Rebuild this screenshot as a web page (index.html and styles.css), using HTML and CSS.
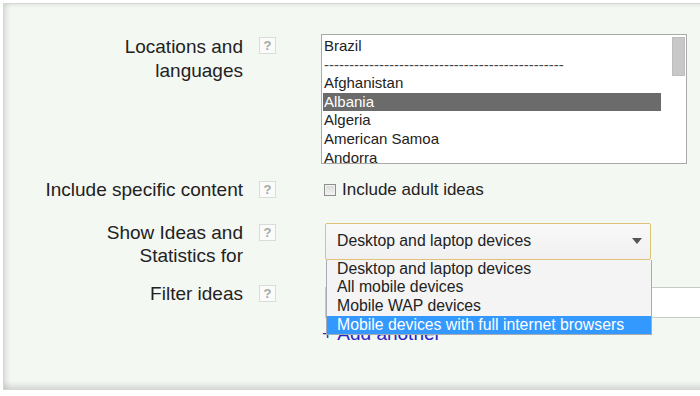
FILE: index.html
```html
<!doctype html>
<html>
<head>
	<meta charset='utf-8'>
	<title>Keyword ideas</title>
	<link rel="stylesheet" href="styles.css">
</head>
<body>
<div class='panel'>
	<div class='row row-locations'>
		<div class='label'>Locations and<br>languages</div>
		<div class='help'><span>?</span></div>
		<div class='field'>
			<div class='listbox'>
				<ul class='list-items'>
					<li>Brazil</li>
					<li class='sep'>------------------------------------------------</li>
					<li>Afghanistan</li>
					<li class='cur'>Albania</li>
					<li>Algeria</li>
					<li>American Samoa</li>
					<li>Andorra</li>
				</ul>
				<div class='scroll'><span class='thumb'></span></div>
			</div>
		</div>
	</div>
	<div class='row row-content'>
		<div class='label'>Include specific content</div>
		<div class='help'><span>?</span></div>
		<div class='field'>
			<label class='check'><span class='box'></span>Include adult ideas</label>
		</div>
	</div>
	<div class='row row-devices'>
		<div class='label'>Show Ideas and<br>Statistics for</div>
		<div class='help'><span>?</span></div>
		<div class='field'>
			<div class='select'>
				<div class='select-value'>Desktop and laptop devices<span class='arrow'></span></div>
				<ul class='select-menu'>
					<li>Desktop and laptop devices</li>
					<li>All mobile devices</li>
					<li>Mobile WAP devices</li>
					<li class='cur'>Mobile devices with full internet browsers</li>
				</ul>
			</div>
		</div>
	</div>
	<div class='row row-filter'>
		<div class='label'>Filter ideas</div>
		<div class='help'><span>?</span></div>
		<div class='field'>
			<div class='input'></div>
			<a class='add'>+ Add another</a>
		</div>
	</div>
</div>
</body>
</html>
```

FILE: styles.css
```css
*{margin:0;padding:0;box-sizing:border-box;}
html,body{background:#fff;overflow:hidden;}
body{font-family:"Liberation Sans",Arial,sans-serif;color:#222;width:700px;height:396px;}
ul{list-style:none;}

.panel{margin:3px 0 0 3px;width:760px;height:387px;padding-top:30px;background:#f4f8f3;border:1px solid #d3d8d1;border-right:0;
	box-shadow:inset 6px 0 6px -4px rgba(0,0,0,.13),inset 0 -8px 6px -5px rgba(0,0,0,.14),inset 0 4px 4px -3px rgba(0,0,0,.08);}

.row{display:grid;grid-template-columns:239px 78px 1fr;align-items:start;}
.row-content{margin-top:14px;}
.row-devices{margin-top:19px;}
.row-filter{margin-top:14px;}

.label{text-align:right;font-size:19px;line-height:23.5px;}
.row-locations .label{padding-top:1px;}

.help{padding:3px 0 0 16px;}
.help span{display:block;width:17px;height:17px;border:1px solid #d9dcd8;background:#fafbfa;color:#a8a8a8;font-size:13px;font-weight:bold;line-height:15px;text-align:center;}

.listbox{display:flex;width:366px;height:130px;border:1px solid #a9a9a9;background:#fff;overflow:hidden;}
.list-items{width:339px;padding:2px 0 0 1px;font-size:15px;line-height:18.6px;}
.list-items li{white-space:nowrap;padding-left:1px;}
.list-items li.sep{color:#444;}
.list-items li.cur{background:#6b6b6b;color:#fff;}
.scroll{margin-left:auto;width:15px;padding:2px 1px 0 1px;}
.thumb{display:block;width:13px;height:39px;background:#c8c8c8;border:1px solid #bdbdbd;}

.check{display:flex;align-items:center;font-size:17px;line-height:23.5px;margin-left:3px;}
.box{width:12px;height:12px;margin:1px 6px 0 0;border:1px solid #8e8e8e;background:linear-gradient(#d9d9d9,#f4f4f4);box-shadow:inset 0 0 0 1px #f2f2f2;}

.select{position:relative;width:326px;margin:2px 0 0 4px;}
.select-value{display:flex;align-items:center;height:37px;padding:0 8px 0 11px;border:1px solid #dfc177;border-radius:2px;background:linear-gradient(#f9f9f9,#f0f0f0);font-size:15.8px;line-height:18px;}
.arrow{margin-left:auto;width:0;height:0;border-top:6px solid #555;border-left:5.5px solid transparent;border-right:5.5px solid transparent;}
.select-menu{position:absolute;top:100%;left:1px;width:326px;z-index:10;border:1px solid #a7abb2;border-top:0;background:#f4f4f4;font-size:15.8px;line-height:18.7px;}
.select-menu li{padding-left:10px;white-space:nowrap;}
.select-menu li.cur{background:#3399ff;color:#fff;}

.input{width:440px;height:31px;margin:5px 0 0 4px;background:#fff;border:1px solid #c9c9c9;border-right:0;}
.add{display:block;margin:4px 0 0 1px;font-size:19px;line-height:23.5px;color:#2424c8;}
```
